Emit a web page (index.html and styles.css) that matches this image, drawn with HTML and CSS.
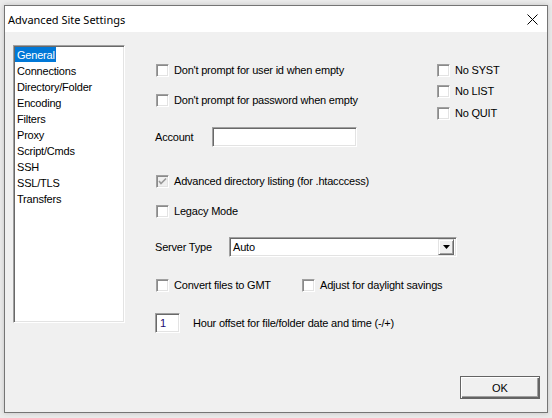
FILE: index.html
```html
<!DOCTYPE html>
<html lang="en">
<head>
  <meta charset="UTF-8" />
  <title>Advanced Site Settings</title>
  <link rel="stylesheet" href="styles.css">
</head>
<body>
  <div class="window">
    <div class="titlebar">
      <span class="title">Advanced Site Settings</span>
      <svg class="close" width="11" height="11" viewBox="0 0 11 11">
        <path d="M0.5 0.5 L10.5 10.5 M10.5 0.5 L0.5 10.5" stroke="#000" stroke-width="1" fill="none"/>
      </svg>
    </div>

    <div class="content">
      <div class="top">
        <ul class="list">
          <li class="selected"><span>General</span></li>
          <li><span>Connections</span></li>
          <li><span>Directory/Folder</span></li>
          <li><span>Encoding</span></li>
          <li><span>Filters</span></li>
          <li><span>Proxy</span></li>
          <li><span>Script/Cmds</span></li>
          <li><span>SSH</span></li>
          <li><span>SSL/TLS</span></li>
          <li><span>Transfers</span></li>
        </ul>

        <div class="panel">
          <div class="upper">
            <div class="upper-left">
              <div class="row r1"><span class="cb"></span><span>Don't prompt for user id when empty</span></div>
              <div class="row r2"><span class="cb"></span><span>Don't prompt for password when empty</span></div>
              <div class="row r3"><span class="label account-label">Account</span><span class="field account"></span></div>
            </div>
            <div class="upper-right">
              <div class="row"><span class="cb"></span><span>No SYST</span></div>
              <div class="row"><span class="cb"></span><span>No LIST</span></div>
              <div class="row gap2"><span class="cb"></span><span>No QUIT</span></div>
            </div>
          </div>

          <div class="row r4">
            <span class="cb checked">
              <svg width="9" height="9" viewBox="0 0 9 9"><path d="M1 4 L3 6.5 L8 1.5" stroke="#9a9a9a" stroke-width="1.6" fill="none"/></svg>
            </span>
            <span>Advanced directory listing (for .htacccess)</span>
          </div>
          <div class="row r5"><span class="cb"></span><span>Legacy Mode</span></div>
          <div class="row r6">
            <span class="label server-label">Server Type</span>
            <div class="select">
              <span class="value">Auto</span>
              <span class="drop">
                <svg width="7" height="4" viewBox="0 0 7 4"><path d="M0 0 H7 L3.5 4 Z" fill="#000"/></svg>
              </span>
            </div>
          </div>
          <div class="row r7">
            <div class="item gmt"><span class="cb"></span><span>Convert files to GMT</span></div>
            <div class="item"><span class="cb"></span><span>Adjust for daylight savings</span></div>
          </div>
          <div class="row r8">
            <span class="field hours">1</span>
            <span class="hours-label">Hour offset for file/folder date and time (-/+)</span>
          </div>
        </div>
      </div>

      <div class="footer">
        <button class="ok">OK</button>
      </div>
    </div>
  </div>
</body>
</html>
```

FILE: styles.css
```css
body {
  margin: 0;
  padding: 5px 4px;
  background: #ebebeb;
  font-family: 'Liberation Sans', Arial, sans-serif;
  font-size: 11px;
  letter-spacing: -0.2px;
  color: #000;
}

.window {
  width: 542px;
  height: 406px;
  border: 1px solid #757575;
  background: #f0f0f0;
  box-shadow: 0 0 5px rgba(0, 0, 0, 0.18);
  display: flex;
  flex-direction: column;
}

.titlebar {
  height: 26px;
  background: #fff;
  display: flex;
  align-items: center;
  justify-content: space-between;
  padding: 0 9px 0 3px;
}

.title {
  font-family: 'Noto Sans', 'Open Sans', sans-serif;
  font-size: 11px;
  letter-spacing: 0;
  color: #000;
}

.content {
  flex: 1;
  display: flex;
  flex-direction: column;
}

.top {
  display: flex;
  align-items: flex-start;
}

/* list box */
.list {
  list-style: none;
  margin: 13px 0 0 8px;
  padding: 1px 0 0 1px;
  width: 109px;
  height: 275px;
  background: #fff;
  border-style: solid;
  border-width: 1px;
  border-color: #a0a0a0 #fff #fff #a0a0a0;
  box-shadow: inset 1px 1px #696969, inset -1px -1px #e3e3e3;
}

.list li {
  height: 16px;
  line-height: 16px;
}

.list li span {
  display: inline-block;
  padding: 0 1px 0 2px;
  height: 15px;
  line-height: 16px;
}

.list li.selected span {
  background: #0078d7;
  color: #fff;
}

/* right panel */
.panel {
  margin-left: 30px;
  padding-top: 28px;
  flex: 1;
  display: flex;
  flex-direction: column;
}

.upper {
  display: flex;
}

.upper-left {
  width: 281px;
}

.upper-right .row + .row {
  margin-top: 1px;
}

.upper-right .row.gap2 {
  margin-top: 2px;
}

.row {
  height: 20px;
  display: flex;
  align-items: center;
}

.r2 { margin-top: 10px; }
.r3 { margin-top: 17px; }
.r4 { margin-top: 24px; }
.r5 { margin-top: 10px; }
.r6 { margin-top: 16px; }
.r7 { margin-top: 18px; }
.r8 { margin-top: 18px; }

.cb {
  box-sizing: border-box;
  width: 13px;
  height: 13px;
  margin: 0 5px 0 1px;
  background: #fff;
  border-style: solid;
  border-width: 1px;
  border-color: #a0a0a0 #fff #fff #a0a0a0;
  box-shadow: inset 1px 1px #8a8a8a, inset -1px -1px #e3e3e3;
  display: flex;
  align-items: center;
  justify-content: center;
}

.cb.checked {
  background: #f0f0f0;
}

.label {
  display: inline-block;
}

.account-label { width: 57px; }
.server-label { width: 74px; }

.field {
  box-sizing: border-box;
  height: 20px;
  background: #fff;
  border-style: solid;
  border-width: 1px;
  border-color: #a0a0a0 #fff #fff #a0a0a0;
  box-shadow: inset 1px 1px #696969, inset -1px -1px #e3e3e3;
}

.account { width: 145px; }

.select {
  box-sizing: border-box;
  width: 228px;
  height: 20px;
  background: #fff;
  border-style: solid;
  border-width: 1px;
  border-color: #a0a0a0 #fff #fff #a0a0a0;
  box-shadow: inset 1px 1px #696969, inset -1px -1px #e3e3e3;
  display: flex;
  align-items: center;
  justify-content: space-between;
  padding: 2px;
}

.select .value {
  padding-left: 1px;
}

.drop {
  box-sizing: border-box;
  width: 16px;
  height: 16px;
  background: #f0f0f0;
  border-style: solid;
  border-width: 1px;
  border-color: #e3e3e3 #696969 #696969 #e3e3e3;
  box-shadow: inset 1px 1px #fff, inset -1px -1px #a0a0a0;
  display: flex;
  align-items: center;
  justify-content: center;
}

.item {
  display: flex;
  align-items: center;
}

.gmt { width: 146px; }

.hours {
  width: 25px;
  padding: 2px 0 0 4px;
  line-height: 14px;
  color: #1c0a70;
}

.hours-label {
  margin-left: 13px;
}

.footer {
  margin-top: auto;
  display: flex;
  justify-content: flex-end;
  padding: 0 7px 13px 0;
}

.ok {
  box-sizing: border-box;
  width: 80px;
  height: 23px;
  background: #f0f0f0;
  font-family: 'Liberation Sans', Arial, sans-serif;
  font-size: 11px;
  color: #000;
  border: 1px solid #646464;
  box-shadow: inset 1px 1px #fff, inset -1px -1px #646464, inset -2px -2px #a0a0a0;
  padding: 0;
}
```
